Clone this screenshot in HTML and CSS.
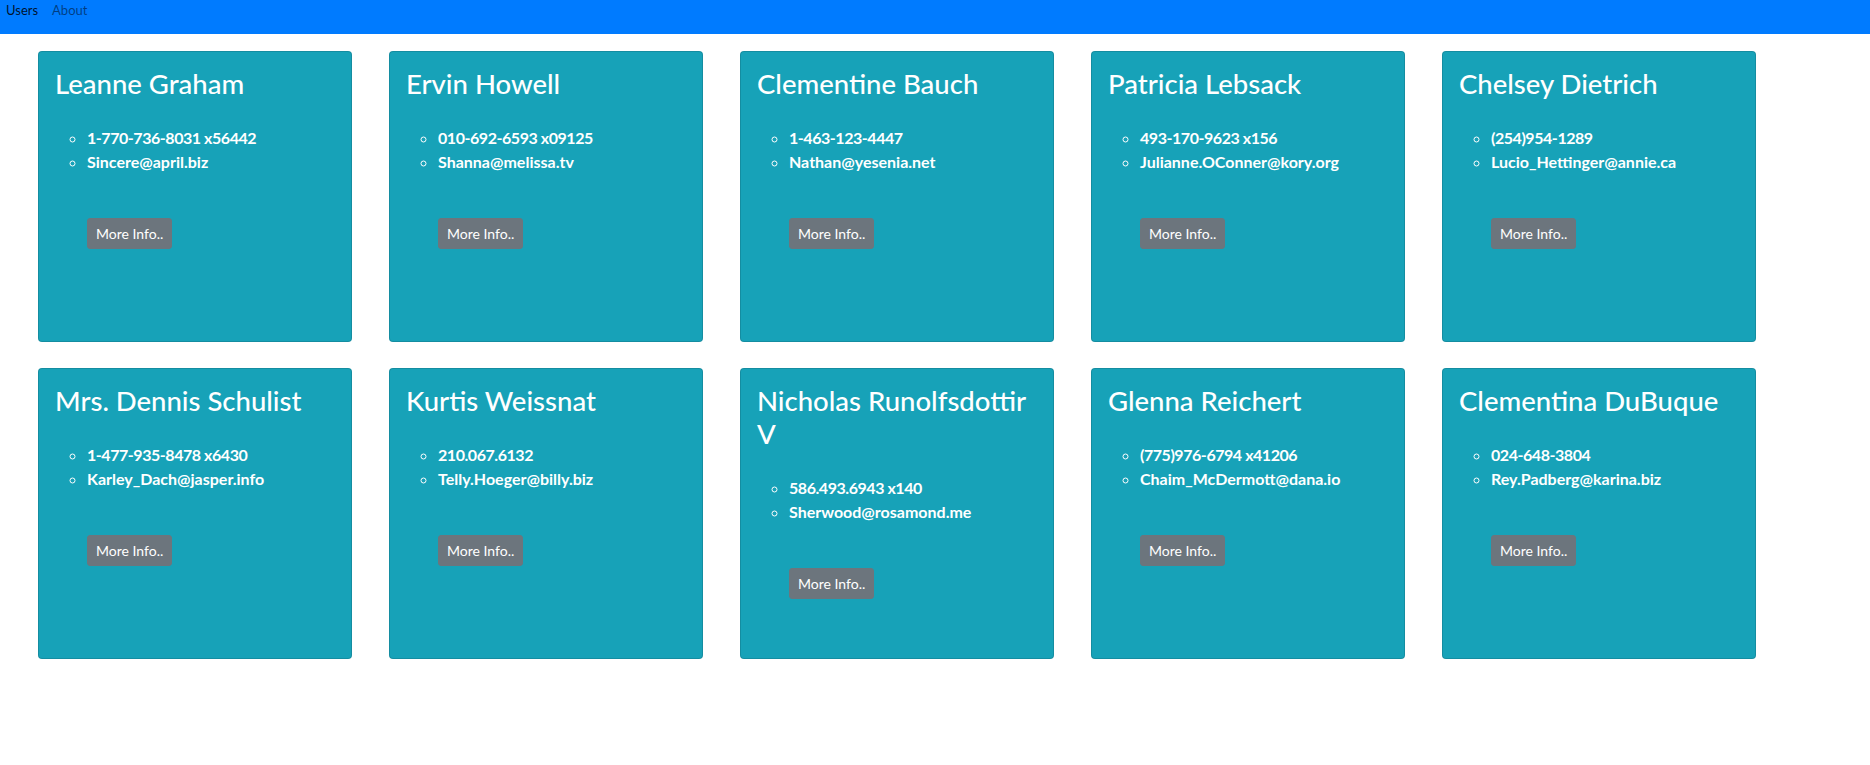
FILE: index.html
```html
<!DOCTYPE html>
<html lang="en">
<head>
<meta charset="utf-8">
<title>Users</title>
<link rel="stylesheet" href="styles.css">
</head>
<body>
<nav class="navbar">
  <a class="nav-link active" href="#">Users</a>
  <a class="nav-link" href="#">About</a>
</nav>
<main class="grid">
  <div class="card">
    <h3 class="card-title">Leanne Graham</h3>
    <ul class="info"><li class="phone">1-770-736-8031 x56442</li><li>Sincere@april.biz</li></ul>
    <button class="btn">More Info..</button>
  </div>
  <div class="card">
    <h3 class="card-title">Ervin Howell</h3>
    <ul class="info"><li class="phone">010-692-6593 x09125</li><li>Shanna@melissa.tv</li></ul>
    <button class="btn">More Info..</button>
  </div>
  <div class="card">
    <h3 class="card-title">Clementine Bauch</h3>
    <ul class="info"><li class="phone">1-463-123-4447</li><li>Nathan@yesenia.net</li></ul>
    <button class="btn">More Info..</button>
  </div>
  <div class="card">
    <h3 class="card-title">Patricia Lebsack</h3>
    <ul class="info"><li class="phone">493-170-9623 x156</li><li>Julianne.OConner@kory.org</li></ul>
    <button class="btn">More Info..</button>
  </div>
  <div class="card">
    <h3 class="card-title">Chelsey Dietrich</h3>
    <ul class="info"><li class="phone">(254)954-1289</li><li>Lucio_Hettinger@annie.ca</li></ul>
    <button class="btn">More Info..</button>
  </div>
  <div class="card">
    <h3 class="card-title">Mrs. Dennis Schulist</h3>
    <ul class="info"><li class="phone">1-477-935-8478 x6430</li><li>Karley_Dach@jasper.info</li></ul>
    <button class="btn">More Info..</button>
  </div>
  <div class="card">
    <h3 class="card-title">Kurtis Weissnat</h3>
    <ul class="info"><li class="phone">210.067.6132</li><li>Telly.Hoeger@billy.biz</li></ul>
    <button class="btn">More Info..</button>
  </div>
  <div class="card">
    <h3 class="card-title">Nicholas Runolfsdottir V</h3>
    <ul class="info"><li class="phone">586.493.6943 x140</li><li>Sherwood@rosamond.me</li></ul>
    <button class="btn">More Info..</button>
  </div>
  <div class="card">
    <h3 class="card-title">Glenna Reichert</h3>
    <ul class="info"><li class="phone">(775)976-6794 x41206</li><li>Chaim_McDermott@dana.io</li></ul>
    <button class="btn">More Info..</button>
  </div>
  <div class="card">
    <h3 class="card-title">Clementina DuBuque</h3>
    <ul class="info"><li class="phone">024-648-3804</li><li>Rey.Padberg@karina.biz</li></ul>
    <button class="btn">More Info..</button>
  </div>
</main>
</body>
</html>
```
FILE: styles.css
```css
* { box-sizing: border-box; }
body {
  margin: 0;
  font-family: Lato, "Noto Sans", sans-serif;
  font-size: 16px;
  line-height: 1.5;
  color: #212529;
  background: #fff;
}
.navbar {
  height: 34px;
  background: #007bff;
  display: flex;
  gap: 14px;
  padding: 0 0 0 6px;
  font-size: 13px;
  line-height: 20px;
}
.nav-link {
  color: rgba(0, 0, 0, 0.5);
  text-decoration: none;
}
.nav-link.active { color: rgba(0, 0, 0, 0.85); }
.grid {
  display: grid;
  grid-template-columns: repeat(5, 314px);
  column-gap: 37px;
  row-gap: 26px;
  padding: 17px 0 0 38px;
}
.card {
  height: 291px;
  background: #17a2b8;
  border: 1px solid rgba(0, 0, 0, 0.125);
  border-radius: 4px;
  padding: 15px 16px;
  color: #fff;
}
.card-title {
  margin: 0 0 8px;
  font-size: 27.5px;
  font-weight: 500;
  line-height: 33px;
}
.info {
  list-style: circle;
  margin: 26px 0 0;
  padding-left: 32px;
  font-weight: 700;
  font-size: 16px;
  line-height: 24px;
}
.phone { letter-spacing: -0.45px; }
.btn {
  display: block;
  margin: 44px 0 0 32px;
  font-family: inherit;
  font-size: 14px;
  line-height: 21px;
  padding: 4px 8px;
  color: #fff;
  background: #6c757d;
  border: 1px solid #6c757d;
  border-radius: 3px;
}
```
